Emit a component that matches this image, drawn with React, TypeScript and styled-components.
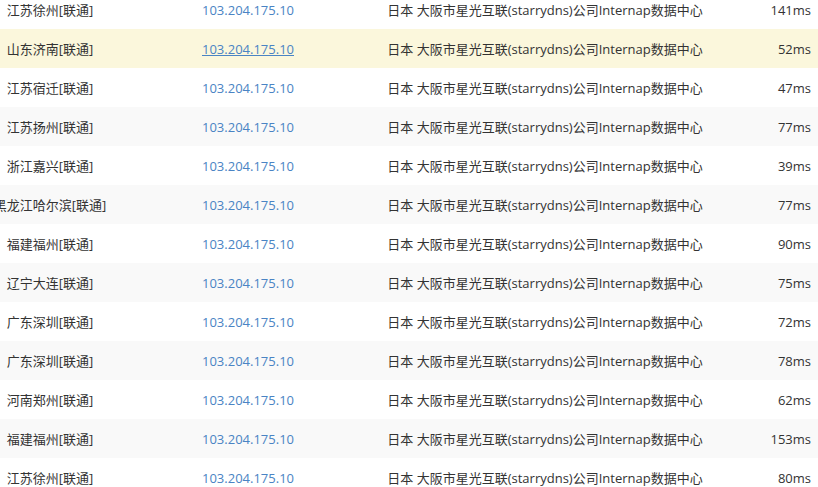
import React from "react";
import styled, { createGlobalStyle } from "styled-components";

const Global = createGlobalStyle`
  html, body { margin: 0; padding: 0; background: #fff; overflow: hidden; }
  body { font-family: "Open Sans", "Noto Sans CJK SC", sans-serif; font-size: 13px; color: #333; }
`;

const Table = styled.div`
  width: 818px;
  margin-top: -10px;
  display: flex;
  flex-direction: column;
`;

const Row = styled.div<{ $bg: string }>`
  display: grid;
  grid-template-columns: 100px 296px 298px 124px;
  height: 39px;
  background: ${(p) => p.$bg};
`;

const Cell = styled.div<{ $align?: "center" | "end" }>`
  display: flex;
  align-items: center;
  justify-content: ${(p) => (p.$align === "end" ? "flex-end" : "center")};
  padding-right: ${(p) => (p.$align === "end" ? "7px" : "0")};
  white-space: nowrap;
  min-width: 0;
  color: #333;
`;

const IpLink = styled.a<{ $hover?: boolean }>`
  color: #4a84c4;
  text-decoration: ${(p) => (p.$hover ? "underline" : "none")};
  cursor: pointer;
`;

const rows: [string, string][] = [
  ["江苏徐州[联通]", "141ms"],
  ["山东济南[联通]", "52ms"],
  ["江苏宿迁[联通]", "47ms"],
  ["江苏扬州[联通]", "77ms"],
  ["浙江嘉兴[联通]", "39ms"],
  ["黑龙江哈尔滨[联通]", "77ms"],
  ["福建福州[联通]", "90ms"],
  ["辽宁大连[联通]", "75ms"],
  ["广东深圳[联通]", "72ms"],
  ["广东深圳[联通]", "78ms"],
  ["河南郑州[联通]", "62ms"],
  ["福建福州[联通]", "153ms"],
  ["江苏徐州[联通]", "80ms"],
];

export default function App() {
  return (
    <>
      <Global />
      <Table>
        {rows.map(([city, ms], i) => {
          const hover = i === 1;
          const bg = hover ? "#fbf7dc" : i % 2 === 1 ? "#f9f9f9" : "#ffffff";
          return (
            <Row key={i} $bg={bg}>
              <Cell>{city}</Cell>
              <Cell>
                <IpLink $hover={hover}>103.204.175.10</IpLink>
              </Cell>
              <Cell>日本 大阪市星光互联(starrydns)公司Internap数据中心</Cell>
              <Cell $align="end">{ms}</Cell>
            </Row>
          );
        })}
      </Table>
    </>
  );
}
